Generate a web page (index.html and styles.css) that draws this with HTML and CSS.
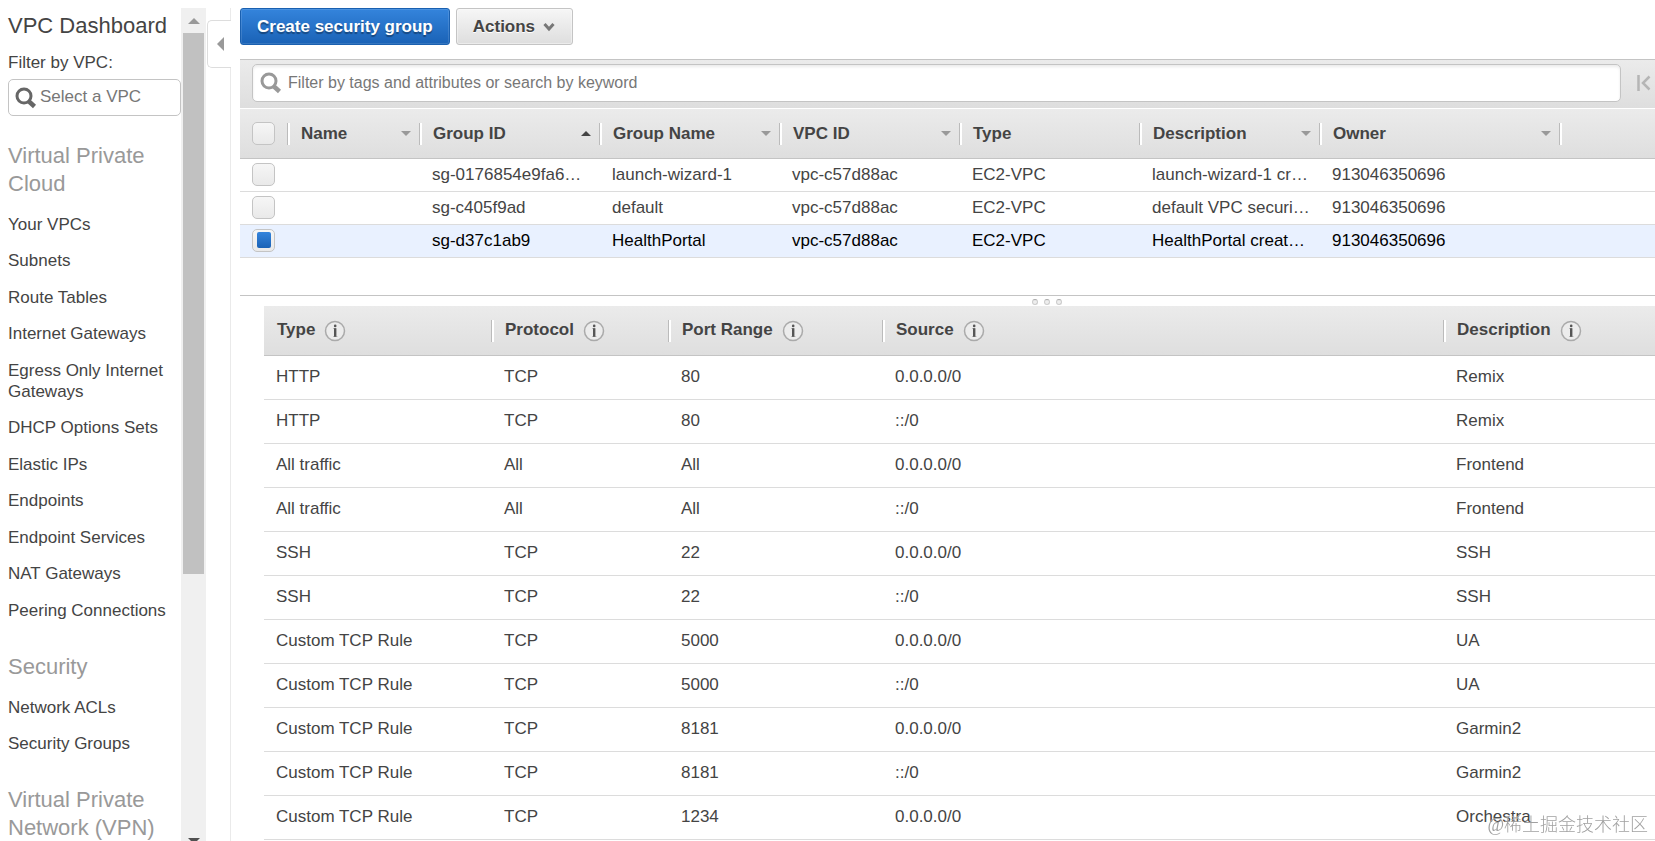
FILE: index.html
```html
<!DOCTYPE html>
<html lang="en">
<head>
  <meta charset="UTF-8">
  <meta name="viewport" content="width=device-width, initial-scale=1">
  <title>Security Groups | VPC Management Console</title>
  <link rel="stylesheet" href="styles.css">
</head>
<body>

<!-- shared icons -->
<svg class="defs" aria-hidden="true">
  <symbol id="icon-search" viewBox="0 0 22 22">
    <circle cx="9" cy="9" r="7" fill="none" stroke="currentColor" stroke-width="3"/>
    <path d="M14 14.5l5.5 5" fill="none" stroke="currentColor" stroke-width="4.5"/>
  </symbol>
  <symbol id="icon-info" viewBox="0 0 22 22">
    <circle cx="11" cy="11" r="9.5" fill="#ececec" stroke="#aaa" stroke-width="1.5"/>
    <path d="M9 8.500h3M9 16.500h4.500" fill="none" stroke="#bbb" stroke-width="1"/>
    <path d="M11.2 8.2v8.600" fill="none" stroke="#555" stroke-width="2.4"/>
    <circle cx="11.2" cy="5.9" r="1.3" fill="#555"/>
  </symbol>
</svg>

<div class="page">

  <aside class="sidebar">
    <nav class="menu">
      <h1>VPC Dashboard</h1>
      <label class="filter-label" for="vpcFilter">Filter by VPC:</label>
      <div class="vpc-filter">
        <svg class="icon-search"><use href="#icon-search"/></svg>
        <input type="text" id="vpcFilter" placeholder="Select a VPC">
      </div>

      <h2>Virtual Private Cloud</h2>
      <ul>
        <li><a href="#">Your VPCs</a></li>
        <li><a href="#">Subnets</a></li>
        <li><a href="#">Route Tables</a></li>
        <li><a href="#">Internet Gateways</a></li>
        <li><a href="#">Egress Only Internet Gateways</a></li>
        <li><a href="#">DHCP Options Sets</a></li>
        <li><a href="#">Elastic IPs</a></li>
        <li><a href="#">Endpoints</a></li>
        <li><a href="#">Endpoint Services</a></li>
        <li><a href="#">NAT Gateways</a></li>
        <li><a href="#">Peering Connections</a></li>
      </ul>

      <h2>Security</h2>
      <ul>
        <li><a href="#">Network ACLs</a></li>
        <li><a href="#">Security Groups</a></li>
      </ul>

      <h2>Virtual Private Network (VPN)</h2>
    </nav>

    <div class="scrollbar" aria-hidden="true">
      <span class="arrow-up"></span>
      <span class="thumb"></span>
      <span class="arrow-down"></span>
    </div>
  </aside>

  <div class="gutter">
    <button class="collapse" type="button" aria-label="Collapse menu"></button>
  </div>

  <main class="main">
    <div class="actions">
      <button class="btn btn-primary" type="button">Create security group</button>
      <button class="btn" type="button">Actions
        <svg width="12" height="10" viewBox="0 0 12 10"><path d="M1.5 2L6 7l4.500-5" fill="none" stroke="#777" stroke-width="3"/></svg>
      </button>
    </div>

    <div class="toolbar">
      <div class="search">
        <svg class="icon-search"><use href="#icon-search"/></svg>
        <input type="text" aria-label="Filter" placeholder="Filter by tags and attributes or search by keyword">
      </div>
      <button class="pager" type="button" aria-label="First page">
        <svg width="14" height="16" viewBox="0 0 14 16"><path d="M1.500 0v16M12.500 1.500L6 8l6.500 6.500" fill="none" stroke="#b5b5b5" stroke-width="2.500"/></svg>
      </button>
    </div>

    <table class="groups">
      <colgroup>
        <col class="c-check"><col class="c-name"><col class="c-std"><col class="c-std"><col class="c-std"><col class="c-std"><col class="c-std"><col class="c-owner"><col>
      </colgroup>
      <thead>
        <tr>
          <th><input type="checkbox" aria-label="Select all"></th>
          <th class="sort">Name</th>
          <th class="sort asc">Group ID</th>
          <th class="sort">Group Name</th>
          <th class="sort">VPC ID</th>
          <th>Type</th>
          <th class="sort">Description</th>
          <th class="sort">Owner</th>
          <th></th>
        </tr>
      </thead>
      <tbody>
        <tr>
          <td><input type="checkbox" aria-label="Select launch-wizard-1"></td>
          <td></td>
          <td>sg-0176854e9fa6…</td>
          <td>launch-wizard-1</td>
          <td>vpc-c57d88ac</td>
          <td>EC2-VPC</td>
          <td>launch-wizard-1 cr…</td>
          <td>913046350696</td>
          <td></td>
        </tr>
        <tr>
          <td><input type="checkbox" aria-label="Select default"></td>
          <td></td>
          <td>sg-c405f9ad</td>
          <td>default</td>
          <td>vpc-c57d88ac</td>
          <td>EC2-VPC</td>
          <td>default VPC securi…</td>
          <td>913046350696</td>
          <td></td>
        </tr>
        <tr class="selected">
          <td><input type="checkbox" aria-label="Select HealthPortal" checked></td>
          <td></td>
          <td>sg-d37c1ab9</td>
          <td>HealthPortal</td>
          <td>vpc-c57d88ac</td>
          <td>EC2-VPC</td>
          <td>HealthPortal creat…</td>
          <td>913046350696</td>
          <td></td>
        </tr>
      </tbody>
    </table>

    <div class="splitter"><i></i><i></i><i></i></div>

    <div class="details">
      <table class="rules">
        <colgroup>
          <col class="r-type"><col class="r-protocol"><col class="r-port"><col><col class="r-desc">
        </colgroup>
        <thead>
          <tr>
            <th>Type<button class="info" type="button" aria-label="About type"><svg><use href="#icon-info"/></svg></button></th>
            <th>Protocol<button class="info" type="button" aria-label="About protocol"><svg><use href="#icon-info"/></svg></button></th>
            <th>Port Range<button class="info" type="button" aria-label="About port range"><svg><use href="#icon-info"/></svg></button></th>
            <th>Source<button class="info" type="button" aria-label="About source"><svg><use href="#icon-info"/></svg></button></th>
            <th>Description<button class="info" type="button" aria-label="About description"><svg><use href="#icon-info"/></svg></button></th>
          </tr>
        </thead>
        <tbody>
          <tr><td>HTTP</td><td>TCP</td><td>80</td><td>0.0.0.0/0</td><td>Remix</td></tr>
          <tr><td>HTTP</td><td>TCP</td><td>80</td><td>::/0</td><td>Remix</td></tr>
          <tr><td>All traffic</td><td>All</td><td>All</td><td>0.0.0.0/0</td><td>Frontend</td></tr>
          <tr><td>All traffic</td><td>All</td><td>All</td><td>::/0</td><td>Frontend</td></tr>
          <tr><td>SSH</td><td>TCP</td><td>22</td><td>0.0.0.0/0</td><td>SSH</td></tr>
          <tr><td>SSH</td><td>TCP</td><td>22</td><td>::/0</td><td>SSH</td></tr>
          <tr><td>Custom TCP Rule</td><td>TCP</td><td>5000</td><td>0.0.0.0/0</td><td>UA</td></tr>
          <tr><td>Custom TCP Rule</td><td>TCP</td><td>5000</td><td>::/0</td><td>UA</td></tr>
          <tr><td>Custom TCP Rule</td><td>TCP</td><td>8181</td><td>0.0.0.0/0</td><td>Garmin2</td></tr>
          <tr><td>Custom TCP Rule</td><td>TCP</td><td>8181</td><td>::/0</td><td>Garmin2</td></tr>
          <tr><td>Custom TCP Rule</td><td>TCP</td><td>1234</td><td>0.0.0.0/0</td><td>Orchestra</td></tr>
        </tbody>
      </table>
    </div>
  </main>

</div>

<div class="watermark">@稀土掘金技术社区</div>

</body>
</html>
```
FILE: styles.css
```css
* {
  box-sizing: border-box;
}

body {
  margin: 0;
  background: #fff;
  color: #444;
  font-family: "Liberation Sans", Arial, sans-serif;
  font-size: 17px;
  line-height: 21px;
}

button, input {
  font: inherit;
  color: inherit;
  margin: 0;
}

button {
  cursor: pointer;
}

.defs {
  display: none;
}

.page {
  display: flex;
  height: 100vh;
  padding-top: 8px;
  overflow: hidden;
}

/* Sidebar */
.sidebar {
  display: flex;
  flex: none;
  width: 206px;
}

.menu {
  flex: 1;
  min-width: 0;
  padding: 4px 0 0 8px;
}

.menu h1,
.menu h2 {
  margin: 0;
  font-size: 22px;
  line-height: 28px;
  font-weight: normal;
}

.menu h2 {
  margin: 26px 0 16px;
  padding-right: 16px;
  color: #999;
}

.filter-label {
  display: block;
  margin: 12px 0 6px;
}

.vpc-filter,
.search {
  display: flex;
  align-items: center;
  border: 1px solid #c4c4c4;
  border-radius: 5px;
  background: #fff;
}

.vpc-filter {
  height: 37px;
  padding-left: 6px;
}

.icon-search {
  flex: none;
  width: 22px;
  height: 22px;
  color: #666;
}

.vpc-filter input,
.search input {
  flex: 1;
  min-width: 0;
  padding: 0 0 3px 3px;
  border: none;
  outline: none;
  background: none;
}

input::placeholder {
  color: #777;
  opacity: 1;
}

.menu ul {
  list-style: none;
  margin: 0;
  padding: 0;
}

.menu li {
  padding-bottom: 15px;
}

.menu li:nth-child(even) {
  padding-bottom: 16px;
}

.menu li:last-child {
  padding-bottom: 6px;
}

.menu a {
  color: inherit;
  text-decoration: none;
}

.scrollbar {
  display: flex;
  flex: none;
  flex-direction: column;
  align-items: center;
  width: 25px;
  background: #f0f0f0;
}

.scrollbar .thumb {
  width: 21px;
  height: 65%;
  background: #c1c1c1;
}

.arrow-up,
.arrow-down {
  border: 6px solid transparent;
}

.arrow-up {
  border-top: none;
  border-bottom-color: #999;
  margin: 10px 0 9px;
}

.arrow-down {
  border-bottom: none;
  border-top-color: #505050;
  margin: auto 0 -3px;
}

/* Gutter with the collapse tab */
.gutter {
  flex: none;
  width: 25px;
  padding-top: 12px;
  background: linear-gradient(#eaeaea, #eaeaea) right / 1px 100% no-repeat;
}

.collapse {
  display: flex;
  align-items: center;
  justify-content: flex-end;
  width: 24px;
  height: 48px;
  margin-left: 1px;
  padding: 0 7px 0 0;
  border: 1px solid #ddd;
  border-right: none;
  border-radius: 5px 0 0 5px;
  background: #fff;
}

.collapse::before {
  content: "";
  border: 7px solid transparent;
  border-left: none;
  border-right-color: #999;
}

/* Main area */
.main {
  flex: 1;
  min-width: 0;
  padding-left: 9px;
}

.actions {
  display: flex;
  gap: 6px;
  margin-bottom: 14px;
}

.btn {
  display: flex;
  align-items: center;
  gap: 8px;
  height: 37px;
  padding: 0 17px 0 16px;
  border: 1px solid #c4c4c4;
  border-radius: 3px;
  background: linear-gradient(#f6f6f6, #dedede);
  box-shadow: inset 0 0 0 1px rgba(255, 255, 255, 0.4);
  color: #444;
  font-weight: bold;
  text-shadow: 0 1px 0 #fff;
}

.btn-primary {
  padding: 0 16px;
  border-color: #1a60b0;
  background: linear-gradient(#3484dc, #1a62b6);
  box-shadow: inset 0 0 0 1px rgba(255, 255, 255, 0.12);
  color: #fff;
  text-shadow: 0 2px 1px rgba(0, 0, 0, 0.35);
}

.toolbar {
  display: flex;
  align-items: center;
  padding: 4px 4px 6px 12px;
  border-top: 1px solid #c4c4c4;
  border-bottom: 1px solid #fff;
  background: linear-gradient(#ebebeb, #dedede);
}

.search {
  flex: 1;
  height: 38px;
  padding-left: 7px;
  box-shadow: inset 0 2px 3px rgba(0, 0, 0, 0.08);
}

.search .icon-search {
  color: #999;
}

.search input {
  padding: 0 0 1px 6px;
  font-size: 16px;
}

.pager {
  display: flex;
  padding: 0;
  margin-left: 16px;
  border: none;
  background: none;
}

table {
  width: 100%;
  table-layout: fixed;
  border-collapse: separate;
  border-spacing: 0;
}

th, td {
  padding: 0 0 2px 12px;
  text-align: left;
  white-space: nowrap;
}

thead tr {
  height: 50px;
  background: linear-gradient(#ebebeb, #dedede);
}

th {
  position: relative;
  padding: 0 0 0 13px;
  border-bottom: 1px solid #c4c4c4;
}

td {
  border-bottom: 1px solid #dcdcdc;
}

/* column divider */
th + th::before {
  content: "";
  position: absolute;
  left: -1px;
  top: 14px;
  width: 2px;
  height: 22px;
  border-left: 1px solid #bbb;
  background: #fff;
}

/* Security groups */
.c-check { width: 48px; }
.c-name { width: 132px; }
.c-std { width: 180px; }
.c-owner { width: 240px; }

.groups tbody tr {
  height: 33px;
}

.sort::after {
  content: "";
  position: absolute;
  right: 9px;
  top: 22px;
  border: 5px solid transparent;
  border-top-color: #999;
  border-bottom: none;
}

.sort.asc::after {
  border-top: none;
  border-bottom: 5px solid #444;
}

.groups .selected {
  background: #e9f1ff;
  color: #000;
}

.groups th:first-child,
.groups td:first-child {
  padding-left: 12px;
}

input[type="checkbox"] {
  appearance: none;
  display: flex;
  align-items: center;
  justify-content: center;
  width: 23px;
  height: 23px;
  border: 1px solid #c4c4c4;
  border-radius: 5px;
  background: linear-gradient(#f6f6f6, #e9e9e9);
}

input[type="checkbox"]:checked::before {
  content: "";
  width: 14px;
  height: 16px;
  border-radius: 2px;
  background: linear-gradient(#3484dc, #1a62b6);
}

/* Drag handle between the list and the details */
.splitter {
  display: flex;
  gap: 6px;
  height: 11px;
  margin-top: 37px;
  padding: 3px 0 0 56%;
  border-top: 1px solid #c4c4c4;
}

.splitter i {
  width: 6px;
  height: 6px;
  border: 1px solid #ccc;
  border-top-color: #aaa;
  border-radius: 50%;
  background: #eee;
}

/* Inbound rules */
.details {
  padding-left: 24px;
}

.r-type { width: 228px; }
.r-protocol { width: 177px; }
.r-port { width: 214px; }
.r-desc { width: 211px; }

.rules tbody tr {
  height: 44px;
}

.info {
  width: 22px;
  height: 22px;
  margin-left: 9px;
  padding: 0;
  border: none;
  background: none;
  vertical-align: middle;
}

.info svg {
  display: block;
  width: 22px;
  height: 22px;
}

.watermark {
  position: fixed;
  right: 7px;
  bottom: 4px;
  color: rgba(120, 120, 120, 0.7);
  font-family: "Liberation Serif", "Noto Sans CJK SC", serif;
  font-size: 18px;
  font-weight: 300;
  line-height: 24px;
  text-shadow: 0 0 1px #fff;
}
```
